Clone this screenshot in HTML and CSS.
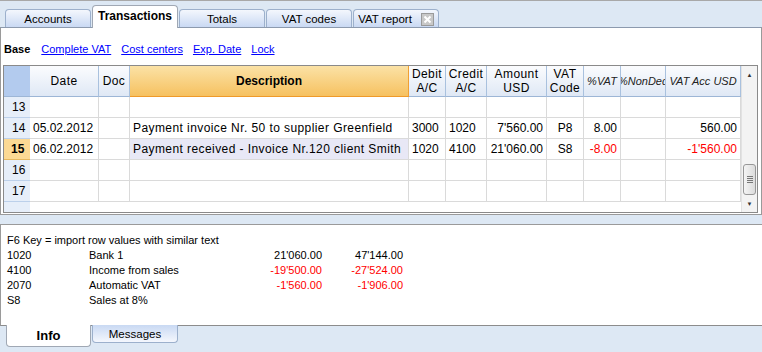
FILE: index.html
```html
<!DOCTYPE html>
<html lang="en">
<head>
    <meta charset="UTF-8">
    <title>Transactions</title>
    <link rel="stylesheet" href="styles.css">
</head>
<body>
    <div class="tabbar">
        <div class="tab">Accounts</div>
        <div class="tab active">Transactions</div>
        <div class="tab">Totals</div>
        <div class="tab">VAT codes</div>
        <div class="tab">VAT report
            <svg class="tab-close" width="13" height="13" viewBox="0 0 13 13">
                <rect x="0.5" y="0.5" width="12" height="12" fill="#c8c8c8" stroke="#9a9a9a"/>
                <path d="M3.5 3.5 L9.5 9.5 M9.5 3.5 L3.5 9.5" stroke="#ffffff" stroke-width="2"/>
            </svg>
        </div>
    </div>

    <div class="main">
        <div class="views">
            <b>Base</b>
            <a href="#">Complete VAT</a>
            <a href="#">Cost centers</a>
            <a href="#">Exp. Date</a>
            <a href="#">Lock</a>
        </div>

        <div class="grid-frame">
            <div class="grid">
                <div class="hd hd-num"></div>
                <div class="hd">Date</div>
                <div class="hd">Doc</div>
                <div class="hd hd-sel">Description</div>
                <div class="hd">Debit<br>A/C</div>
                <div class="hd">Credit<br>A/C</div>
                <div class="hd">Amount<br>USD</div>
                <div class="hd">VAT<br>Code</div>
                <div class="hd hd-it">%VAT</div>
                <div class="hd hd-it hd-clip"><span>%NonDed</span></div>
                <div class="hd hd-it">VAT Acc USD</div>

                <div class="num">13</div>
                <div class="c"></div><div class="c"></div><div class="c"></div><div class="c"></div><div class="c"></div>
                <div class="c"></div><div class="c"></div><div class="c"></div><div class="c"></div><div class="c"></div>

                <div class="num">14</div>
                <div class="c">05.02.2012</div>
                <div class="c"></div>
                <div class="c txt">Payment invoice Nr. 50 to supplier Greenfield</div>
                <div class="c">3000</div>
                <div class="c">1020</div>
                <div class="c r">7'560.00</div>
                <div class="c mid">P8</div>
                <div class="c r">8.00</div>
                <div class="c"></div>
                <div class="c r">560.00</div>

                <div class="num cur">15</div>
                <div class="c">06.02.2012</div>
                <div class="c"></div>
                <div class="c txt sel">Payment received - Invoice Nr.120 client Smith</div>
                <div class="c">1020</div>
                <div class="c">4100</div>
                <div class="c r">21'060.00</div>
                <div class="c mid">S8</div>
                <div class="c r neg">-8.00</div>
                <div class="c"></div>
                <div class="c r neg">-1'560.00</div>

                <div class="num">16</div>
                <div class="c"></div><div class="c"></div><div class="c"></div><div class="c"></div><div class="c"></div>
                <div class="c"></div><div class="c"></div><div class="c"></div><div class="c"></div><div class="c"></div>

                <div class="num">17</div>
                <div class="c"></div><div class="c"></div><div class="c"></div><div class="c"></div><div class="c"></div>
                <div class="c"></div><div class="c"></div><div class="c"></div><div class="c"></div><div class="c"></div>

                <div class="num filler"></div>
                <div class="filler-rest"></div>
            </div>

            <div class="scrollbar">
                <div class="sb-arrow">&#9650;</div>
                <div class="sb-track">
                    <div class="sb-thumb"><i></i><i></i><i></i><i></i></div>
                </div>
                <div class="sb-arrow">&#9660;</div>
            </div>
        </div>
    </div>

    <div class="info">
        <div class="info-line">F6 Key = import row values with similar text</div>
        <div class="info-row">
            <span>1020</span><span>Bank 1</span><span class="r">21'060.00</span><span class="r">47'144.00</span>
        </div>
        <div class="info-row">
            <span>4100</span><span>Income from sales</span><span class="r neg">-19'500.00</span><span class="r neg">-27'524.00</span>
        </div>
        <div class="info-row">
            <span>2070</span><span>Automatic VAT</span><span class="r neg">-1'560.00</span><span class="r neg">-1'906.00</span>
        </div>
        <div class="info-row">
            <span>S8</span><span>Sales at 8%</span><span></span><span></span>
        </div>
    </div>

    <div class="bottom-tabs">
        <div class="btab active">Info</div>
        <div class="btab">Messages</div>
    </div>
</body>
</html>
```

FILE: styles.css
```css
* {
    margin: 0;
    padding: 0;
    box-sizing: border-box;
}

body {
    font-family: 'Liberation Sans', Arial, sans-serif;
    font-size: 11px;
    color: #000;
    background: #dde8f4;
    width: 762px;
    height: 352px;
    overflow: hidden;
    border-top: 1px solid #a8a8a8;
}

/* top tabs */
.tabbar {
    height: 26px;
    display: flex;
    align-items: flex-end;
    padding-left: 5px;
    gap: 1px;
}

.tab {
    width: 86px;
    height: 18px;
    border: 1px solid #9cb0cc;
    border-bottom: none;
    border-radius: 4px 4px 0 0;
    background: linear-gradient(#f4f7fd, #c9d9f3);
    display: flex;
    align-items: center;
    justify-content: center;
    gap: 9px;
    font-size: 11.5px;
    padding-top: 1px;
}

.tab.active {
    height: 23px;
    margin-bottom: -1px;
    background: #fff;
    border-color: #a0a8b4;
    font-weight: bold;
    font-size: 12px;
    position: relative;
    z-index: 1;
    padding-bottom: 3px;
}

.tab-close {
    display: block;
}

/* main panel */
.main {
    background: #fff;
    border: 1px solid #9a9a9a;
    border-top-color: #8c9aae;
    height: 188px;
    padding-left: 2px;
}

.views {
    height: 37px;
    padding: 14px 0 0 1px;
    line-height: 14px;
    font-size: 11px;
    display: flex;
    gap: 10px;
}

.views a {
    color: #0000ff;
}

.views b {
    margin-right: 1px;
}

.grid-frame {
    width: 755px;
    height: 148px;
    border: 1px solid #8a8a8a;
    display: flex;
}

.grid {
    width: 737px;
    display: grid;
    grid-template-columns: 26px 69px 31px 279px 37px 41px 60px 37px 37px 45px 75px;
    grid-template-rows: 31px repeat(5, 21px) 10px;
    overflow: hidden;
    font-size: 12px;
}

.hd {
    background: linear-gradient(#fbfcfe, #dfe8f5);
    border-right: 1px solid #a9c1de;
    border-bottom: 1px solid #9db6d6;
    display: flex;
    align-items: center;
    justify-content: center;
    text-align: center;
    line-height: 14px;
    letter-spacing: 0.4px;
}

.hd-num {
    background: #b3cbee;
    border-right: none;
}

.hd-sel {
    background: linear-gradient(#fbe2a6, #f6c160);
    border-right-color: #f0a033;
    border-bottom-color: #ef9a2a;
    font-weight: bold;
    letter-spacing: 0;
}

.hd-it {
    font-style: italic;
    font-size: 11px;
    letter-spacing: 0;
    color: #222;
}

.hd-clip {
    overflow: hidden;
}

.hd-clip span {
    white-space: nowrap;
}

.num {
    background: #e6eef9;
    border-bottom: 1px solid #bcd0ea;
    padding-left: 8px;
    line-height: 20px;
}

.num.cur {
    background: #fcd994;
    font-weight: bold;
    padding-left: 7px;
    border-bottom-color: #e6b860;
}

.num.filler {
    border-bottom: none;
}

.filler-rest {
    grid-column: 2 / 12;
}

.c {
    border-right: 1px solid #dadada;
    border-bottom: 1px solid #dadada;
    padding: 0 3px;
    line-height: 20px;
    white-space: nowrap;
    overflow: hidden;
}

.c.txt {
    letter-spacing: 0.42px;
}

.c.r {
    text-align: right;
}

.c.mid {
    text-align: center;
}

.c.sel {
    background: #e8e8f6;
}

.neg {
    color: #ff0000;
}

/* scrollbar */
.scrollbar {
    width: 16px;
    background: #f3f3f3;
    border-left: 1px solid #e2e2e2;
    display: flex;
    flex-direction: column;
}

.sb-arrow {
    height: 17px;
    font-size: 6px;
    line-height: 19px;
    text-align: center;
    color: #333;
}

.sb-track {
    flex: 1;
    display: flex;
    flex-direction: column;
    justify-content: flex-end;
    padding: 0 1px 0 1px;
}

.sb-thumb {
    height: 31px;
    border: 1px solid #979797;
    border-radius: 3px;
    background: linear-gradient(90deg, #f4f4f4, #dcdcdc);
    display: flex;
    flex-direction: column;
    justify-content: center;
    align-items: center;
    gap: 1px;
}

.sb-thumb i {
    width: 6px;
    height: 1px;
    background: #777;
}

/* info panel */
.info {
    margin-top: 9px;
    background: #fff;
    border-top: 1px solid #9a9a9a;
    border-left: 1px solid #9a9a9a;
    border-bottom: 1px solid #8c8c8c;
    height: 102px;
    padding: 8px 0 0 6px;
    line-height: 15px;
}

.info-row {
    display: grid;
    grid-template-columns: 82px 150px 83px 81px;
}

.info-row .r {
    text-align: right;
}

/* bottom tabs */
.bottom-tabs {
    display: flex;
    align-items: flex-start;
    padding-left: 6px;
    gap: 1px;
    margin-top: -1px;
}

.btab {
    width: 86px;
    height: 18px;
    border: 1px solid #9cb0cc;
    border-top: none;
    border-radius: 0 0 4px 4px;
    background: linear-gradient(#c9d9f3, #f4f7fd);
    display: flex;
    align-items: center;
    justify-content: center;
    font-size: 11.5px;
}

.btab.active {
    width: 85px;
    height: 22px;
    background: #fff;
    border-color: #a0a8b4;
    font-weight: bold;
    font-size: 13px;
    position: relative;
    z-index: 1;
}
```
